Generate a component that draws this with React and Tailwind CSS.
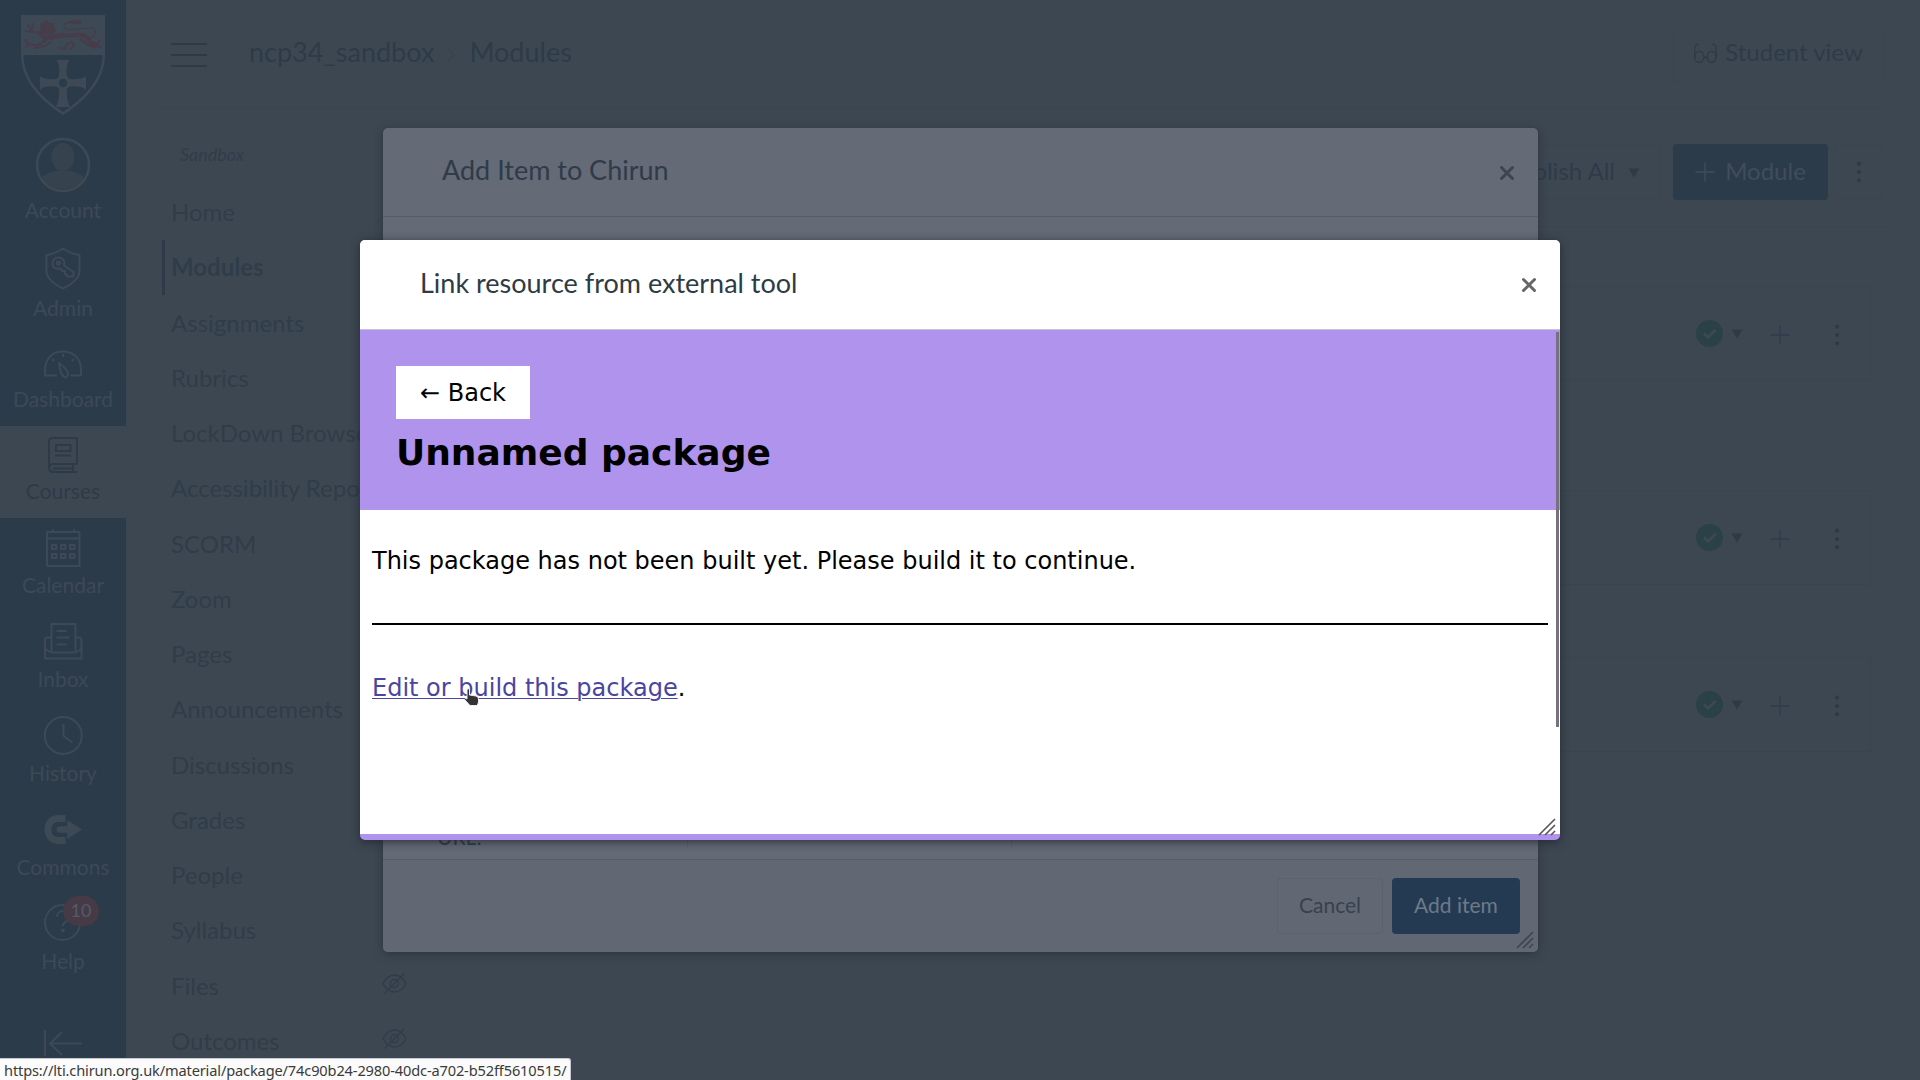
const NAV = '#3d4955';
const INK = '#2d3b49';

function Icon({ name }) {
  const p = { fill: 'none', stroke: name === 'Courses' ? INK : NAV, strokeWidth: 2, strokeLinejoin: 'round' };
  return (
    <svg width="40" height="50" viewBox="0 0 40 50" className="shrink-0" {...p}>
      {name === 'Admin' && (
        <>
          <path d="M20 2.500 C25 6 30 8 36.500 9 V25 C36.500 32 29 38.500 20 42.500 C11 38.500 3.500 32 3.500 25 V9 C10 8 15 6 20 2.500 Z" />
          <path d="M21 19.500 C22.500 15 19.500 11.500 15.500 11.500 C11.500 11.500 9.500 14.500 9.500 17.500 C9.500 21.500 13 23.500 17 22.500 L19.500 25 H22 V27.500 L25 30.500 H30.500 V26 Z" />
          <circle cx="15.500" cy="17" r="1.600" />
        </>
      )}
      {name === 'Dashboard' && (
        <>
          <path d="M14 38.500 H2 V33 C2 21 10 14.500 20 14.500 C30 14.500 38 21 38 33 V38.500 H27" />
          <path d="M16 26 C20 29 25 33 25 37 C25 39.500 23 40.500 21.500 40 C18 39 17 33 16 26 Z" />
          <path d="M20 17 V20 M9 22 L11 24 M31 22 L29 24" />
        </>
      )}
      {name === 'Courses' && (
        <>
          <path d="M10 35 C5 35 5 43 10 43 H34 M30 43 V36 M10 39.500 H29 M6 38 V12 Q6 9 10 9 H34 V35 H10" />
          <path d="M13 16 H27.500 V22 H13 Z M12 26.500 H28" />
        </>
      )}
      {name === 'Calendar' && (
        <>
          <path d="M4 9 H36.500 V43 H4 Z M4 15.500 H36.500 M10 6 V10 M31 6 V10" />
          <path d="M9 22 H13.500 V26 H9 Z M18 22 H22.500 V26 H18 Z M27 22 H31.500 V26 H27 Z M9 31 H13.500 V35 H9 Z M18 31 H22.500 V35 H18 Z M27 31 H31.500 V35 H27 Z" />
        </>
      )}
      {name === 'Inbox' && (
        <>
          <path d="M8.500 34 V7 H32.500 V34" />
          <path d="M8 20.500 H4 Q2 20.500 2 23 V41.500 H38.500 V23 Q38.500 20.500 36 20.500 H33 M2 30 C4 34 7 35.500 11 35.500 H30 C34 35.500 37 34 38.500 30" />
          <path d="M13.500 14 H23.500 M13.500 20.500 H26.500 M13.500 27.500 H23.500" />
        </>
      )}
      {name === 'History' && (
        <>
          <circle cx="20.300" cy="24.500" r="18.500" />
          <path d="M20.500 13 V25 L29.500 31.500" />
        </>
      )}
      {name === 'Commons' && (
        <>
          <path d="M22.500 13.500 H15.500 C8.500 13.500 5 18.500 5 24.500 C5 30.500 8.500 35.500 15.500 35.500 H22.500" strokeWidth="7" strokeLinejoin="miter" />
          <path d="M16.500 21 H24 V14.500 L39.500 24.500 L24 34.500 V28 H16.500 C12 28 12 21 16.500 21 Z" fill={NAV} stroke={INK} strokeWidth="0.500" />
        </>
      )}
      {name === 'Help' && (
        <>
          <circle cx="19.500" cy="23.500" r="17.500" />
          <path d="M14 18 C14 14 17 12 20 12 C24 12 26.500 14.500 26.500 17.500 C26.500 22 20 22 20 27" />
          <circle cx="20" cy="31.500" r="1.500" fill={NAV} strokeWidth="1" />
        </>
      )}
    </svg>
  );
}

function Crest() {
  return (
    <svg width="86" height="102" viewBox="0 0 86 102">
      <path d="M1 1 H85 V41 C85 66 66 86 43 101 C20 86 1 66 1 41 Z" fill={NAV} />
      <path d="M3.500 41 H82.500 C82.500 65 64 84 43 98 C22 84 3.500 65 3.500 41 Z" fill="#2c3b49" />
      <path d="M36.500 46 H49.500 C46 51 46.500 57 47 62 Q48 64 50 65 C56 65.500 62 65.500 66 62 V76 C62 72 56 72 50 72.500 Q48 73 47 75 C46.500 81 47 87 50 93 H36 C39 87 39.500 81 39 75 Q38 73 36 72.500 C30 72 24 72 20 76 V62 C24 65.500 30 65.500 36 65 Q38 64 39 62 C39.500 57 40 51 36.500 46 Z" fill={NAV} />
      <circle cx="43" cy="69" r="4.200" fill="#2c3b49" />
      <g fill="none" stroke="#473c49" strokeLinecap="round" strokeLinejoin="round">
        <path d="M21 10 L27 7 L29 10 L34 9 L33 13 L36 16 L33 20 L34 25 L28 25 L25 28 L22 23 L18 20 L21 16 Z" fill="#473c49" strokeWidth="1" />
        <path d="M33 24 C38 19 46 23 57 21 C64 20 68 23 70 28 L77 31" strokeWidth="4" />
        <path d="M61 25 C66 30 70 32 75 33" strokeWidth="3" />
        <path d="M24 27 C20 31 14 33 7 29 M31 28 L25 32 L14 34 M52 28 L46 31 L45 35 L40 34 M53 28 L54 32 L50 35 M20 18 L12 18 L8 11 M12 18 L6 17 M12 16 L13 10 M8 29 L5 26 M9 31 L6 33 M76 31 L80 27 M77 32 L81 33" strokeWidth="2" />
        <path d="M69 25 C77 21 78 14 70 14 C61 14 51 18 45 14 C41 10 48 6 61 9" strokeWidth="1.200" />
        <path d="M50 8 Q56 5 61 8 Q56 11 50 8 Z" fill="#473c49" strokeWidth="1.500" />
        <path d="M24 16 H29 M25 20 L29 21" stroke={NAV} strokeWidth="1" />
      </g>
    </svg>
  );
}

const navItems = [
  ['Admin', 'h-[98px] pb-[16px]'],
  ['Dashboard', 'h-[90px] pb-[15px]'],
  ['Courses', 'h-[92px] pb-[15px] bg-[#3d4751]'],
  ['Calendar', 'h-[94px] pb-[15px]'],
  ['Inbox', 'h-[94px] pb-[15px]'],
  ['History', 'h-[94px] pb-[15px]'],
  ['Commons', 'h-[94px] pb-[15px]'],
  ['Help', 'h-[94px] pb-[15px]'],
];

function GlobalNav() {
  return (
    <nav className="flex h-full w-[126px] shrink-0 flex-col bg-[#2c3b49] text-[21px] leading-6 text-[#3d4955]">
      <div className="flex h-[126px] justify-center pt-3.5"><Crest /></div>
      <div className="flex h-[112px] flex-col items-center justify-end pb-4">
        <svg width="56" height="56" viewBox="0 0 56 56" className="mb-[5px]">
          <ellipse cx="28" cy="20" rx="11.500" ry="14" fill="#36434f" />
          <path d="M7 41 C12 31 44 31 49 41 C42 56 14 56 7 41 Z" fill="#36434f" />
          <circle cx="28" cy="28" r="26" fill="none" stroke={NAV} strokeWidth="2.500" />
        </svg>
        Account
      </div>
      {navItems.map(([n, c]) => (
        <div key={n} className={'relative flex shrink-0 flex-col items-center justify-end ' + c + (n === 'Courses' ? ' text-[#2d3b49]' : '')}>
          <Icon name={n} />
          {n}
          {n === 'Help' && (
            <span className="absolute left-[63px] top-0.5 flex h-[30px] w-[36px] items-center justify-center rounded-full bg-[#463a47] pb-0.5 text-[18px] text-[#525b66]">10</span>
          )}
        </div>
      ))}
      <div className="flex justify-center pt-[41px]">
        <svg width="40" height="30" viewBox="0 0 40 30" fill="none" stroke={NAV} strokeWidth="2">
          <path d="M2 1 V27 M39 14.500 H7 M19 3 L7 14.500 L19 26" />
        </svg>
      </div>
    </nav>
  );
}

const menu = ['Home', 'Modules', 'Assignments', 'Rubrics', 'LockDown Browser', 'Accessibility Report', 'SCORM', 'Zoom', 'Pages', 'Announcements', 'Discussions', 'Grades', 'People', 'Syllabus', 'Files', 'Outcomes'];

function HiddenEye() {
  return (
    <svg width="25" height="23" viewBox="0 0 25 23" fill="none" stroke="#2f3d4a" strokeWidth="1.400">
      <path d="M1 11.500 C4 5.500 8 3 12.500 3 C17 3 21 5.500 24 11.500 C21 17.500 17 20 12.500 20 C8 20 4 17.500 1 11.500 Z" />
      <circle cx="12.500" cy="11.500" r="4" />
      <path d="M2.500 21.500 L22.500 1.500" />
    </svg>
  );
}

function CourseMenu() {
  return (
    <div className="w-[260px] shrink-0 pt-[33px] text-[#2f3d4a]">
      <div className="h-[43.5px] pl-[17px] text-[18px] italic leading-[27px]">Sandbox</div>
      {menu.map((m) => (
        <div
          key={m}
          className={'flex h-[55.25px] items-center justify-between whitespace-nowrap text-[24px] ' + (m === 'Modules' ? '-ml-px border-l-3 border-[#2d3b49] pl-[6px] font-bold' : 'pl-2')}
        >
          <span>{m}</span>
          {(m === 'Files' || m === 'Outcomes') && <span className="mr-[16px] -mt-1"><HiddenEye /></span>}
        </div>
      ))}
    </div>
  );
}

const Caret = () => <svg width="12" height="10" viewBox="0 0 12 10" fill={INK}><path d="M0.500 0.500 H11.500 L6 9.500 Z" /></svg>;
const Dots = () => <svg width="6" height="22" viewBox="0 0 6 22" fill={INK}><circle cx="3" cy="2.700" r="2.100" /><circle cx="3" cy="11" r="2.100" /><circle cx="3" cy="19.300" r="2.100" /></svg>;
const Plus = ({ c }) => <svg width="20" height="20" viewBox="0 0 20 20" stroke={c} strokeWidth="1.400"><path d="M10 0.500 V19.500 M0.500 10 H19.500" /></svg>;

function ModuleCard({ className }) {
  return (
    <div className={'flex items-center justify-end border border-[#3a444f] pr-[30px] ' + className}>
      <svg width="27" height="27" viewBox="0 0 27 27"><circle cx="13.500" cy="13.500" r="13.500" fill="#2b4148" /><path d="M8 13.500 L12 17.500 L19.500 10" fill="none" stroke="#3d4a52" strokeWidth="2.600" /></svg>
      <span className="ml-2"><Caret /></span>
      <span className="ml-[27px] mt-0.5"><Plus c="#2f3d4a" /></span>
      <span className="ml-[44px] mt-[3px]"><Dots /></span>
    </div>
  );
}

const Close = ({ c }) => <svg width="16" height="16" viewBox="0 0 16 16" stroke={c} strokeWidth="3" strokeLinecap="round" className="-mr-px mt-px"><path d="M2.500 2.500 L13.500 13.500 M13.500 2.500 L2.500 13.500" /></svg>;
const Grip = ({ c }) => <svg width="18" height="18" viewBox="0 0 18 18" stroke={c} strokeWidth="1.600"><path d="M1 17 L17 1 M7 17 L17 7 M13 17 L17 13" /></svg>;

export default function App() {
  return (
    <div className="relative h-[1080px] w-[1920px] overflow-hidden bg-[#3d4751] font-['Lato',sans-serif]">
      <div className="flex h-full">
        <GlobalNav />
        <div className="flex min-w-0 flex-1 flex-col pl-[37px] pr-[33px]">
          <header className="flex h-[108px] shrink-0 items-center border-b border-[#3a444f] pl-2 pr-[3px] text-[27px] text-[#2d3b49]">
            <div className="mt-0.5 flex w-9 flex-col gap-[9px]">
              <div className="h-0.5 bg-[#2d3b49]" /><div className="h-0.5 bg-[#2d3b49]" /><div className="h-0.5 bg-[#2d3b49]" />
            </div>
            <span className="-mt-0.5 ml-[42px]">ncp34_sandbox</span>
            <svg width="9" height="14" viewBox="0 0 9 14" className="ml-[13px] mr-[13px] mt-0.5" fill="none" stroke="#33404d"><path d="M1 1 L7.500 7 L1 13" /></svg>
            <span className="-mt-0.5">Modules</span>
            <div className="ml-auto flex h-[56px] w-[211px] items-center justify-center gap-2 rounded border border-[#3b4550] pb-[3px] text-[24px]">
              <svg width="23" height="20" viewBox="0 0 23 20" fill="none" stroke={INK} strokeWidth="1.300" className="mt-0.5">
                <path d="M0.800 14 V5 Q0.800 1.500 5 1.200 M22.200 14 V5 Q22.200 1.500 18 1.200 M9.500 15 Q11.500 13.500 13.500 15" /><path d="M0.800 14 C0.800 6.500 9.800 6.500 9.800 14 C9.800 21 0.800 21 0.800 14 Z M13.200 14 C13.200 6.500 22.200 6.500 22.200 14 C22.200 21 13.200 21 13.200 14 Z" />
              </svg>
              Student view
            </div>
          </header>
          <div className="flex min-h-0 flex-1">
            <CourseMenu />
            <main className="flex-1 pl-3 text-[24px] text-[#2d3b49]">
              <div className="flex h-[119px] items-center justify-end border-b border-[#3a444f] pr-1 pt-[9px]">
                <div className="mr-[12px] flex h-[56px] items-center gap-[13px] rounded border border-[#3b4550] px-5 pb-0.5">Publish All <span className="mt-[5px] flex"><Caret /></span></div>
                <div className="mr-[6px] flex h-[56px] w-[155px] items-center justify-center gap-2.5 rounded-[4px] bg-[#2c3b49] pb-0.5 text-[#414d59]"><span className="mt-0.5"><Plus c="#414d59" /></span>Module</div>
                <div className="flex h-[56px] w-[49px] items-center justify-center rounded border border-[#3b4550]"><Dots /></div>
              </div>
              <div className="mr-4 pt-[59px]">
                <ModuleCard className="h-[95px]" />
                <ModuleCard className="mt-[109px] h-[95px]" />
                <ModuleCard className="mt-[72px] h-[95px]" />
              </div>
            </main>
          </div>
        </div>
      </div>

      <section className="absolute left-[383px] top-[128px] flex h-[824px] w-[1155px] flex-col rounded-[5px] bg-[#646a76] text-[#2f3b48] shadow-[0_2px_8px_rgba(30,42,54,0.6)]">
        <div className="flex h-[89px] shrink-0 items-center justify-between border-b border-[#555e69] pl-[59px] pr-6 text-[27px]">
          <span className="-mt-1">Add Item to Chirun</span><Close c="#3c4550" />
        </div>
        <div className="flex flex-1 items-end pl-[54px]">
          <span className="mb-[10px] w-[250px] text-[21px] leading-6">URL:</span>
          <span className="mb-[10px] h-10 w-[325px] border-x border-[#5a626e]" />
        </div>
        <div className="flex h-[93px] items-center justify-end gap-[9px] rounded-b-[5px] border-t border-[#555e69] bg-[#616773] pr-[18px] text-[21px]">
          <div className="flex h-[56px] w-[106px] items-center justify-center rounded border border-[#586270] pb-0.5 text-[#36424e]">Cancel</div>
          <div className="flex h-[56px] w-[128px] items-center justify-center rounded bg-[#243a52] pb-0.5 text-[#6d7a88]">Add item</div>
        </div>
        <span className="absolute bottom-[3px] right-[4px]"><Grip c="#3c4550" /></span>
      </section>

      <section className="absolute left-[360px] top-[240px] flex h-[600px] w-[1200px] flex-col overflow-hidden rounded-[5px] bg-[#af93ed] font-['DejaVu_Sans',sans-serif] text-[24px] text-black shadow-[0_2px_10px_rgba(30,38,48,0.8)]">
        <div className="flex h-[90px] shrink-0 items-center justify-between border-b border-[#c7c3d6] bg-white pl-[60px] pr-6 font-['Lato',sans-serif] text-[27px] text-[#2d3b45]">
          <span className="-mt-0.5">Link resource from external tool</span><Close c="#666" />
        </div>
        <div className="flex h-[180px] shrink-0 flex-col items-start pl-9 pt-9">
          <div className="flex h-[53px] w-[134px] items-center justify-center bg-white">← Back</div>
          <h1 className="mt-[12px] text-[36px] font-bold leading-[43px]">Unnamed package</h1>
        </div>
        <div className="h-[324px] bg-white px-3 pt-[33px]">
          <p className="leading-9">This package has not been built yet. Please build it to continue.</p>
          <hr className="mt-[44px] h-0.5 border-0 bg-black" />
          <p className="mt-[45px] leading-9"><span className="text-[#4a45a0] underline decoration-1 underline-offset-2">Edit or build this package</span>.</p>
        </div>
        <span className="absolute right-[1px] top-[92px] h-[395px] w-[3px] bg-[#77717e]" />
        <span className="absolute bottom-[4px] right-[4px]"><Grip c="#555" /></span>
        <svg className="absolute left-[103px] top-[447px]" width="18" height="22" viewBox="0 0 18 22">
          <path d="M4 2.500 Q5 1 6.500 2.500 V8 L13 9 Q15.500 9.500 15.500 12 V15 Q15 17 14 18.500 H7 L1.500 12.500 Q2 10.500 4 12 Z" fill="#333" stroke="#eee" strokeWidth="1" />
        </svg>
      </section>

      <div className="absolute bottom-0 left-0 flex h-[22px] w-[571px] items-center whitespace-nowrap rounded-tr-[3px] border-r border-t border-[#c5c8d0] bg-[#fbfbfb] pl-1 font-['Noto_Sans',sans-serif] text-[14.6px] leading-5 tracking-[-0.14px] text-[#3a3a3a]">
        https://lti.chirun.org.uk/material/package/74c90b24-2980-40dc-a702-b52ff5610515/
      </div>
    </div>
  );
}
